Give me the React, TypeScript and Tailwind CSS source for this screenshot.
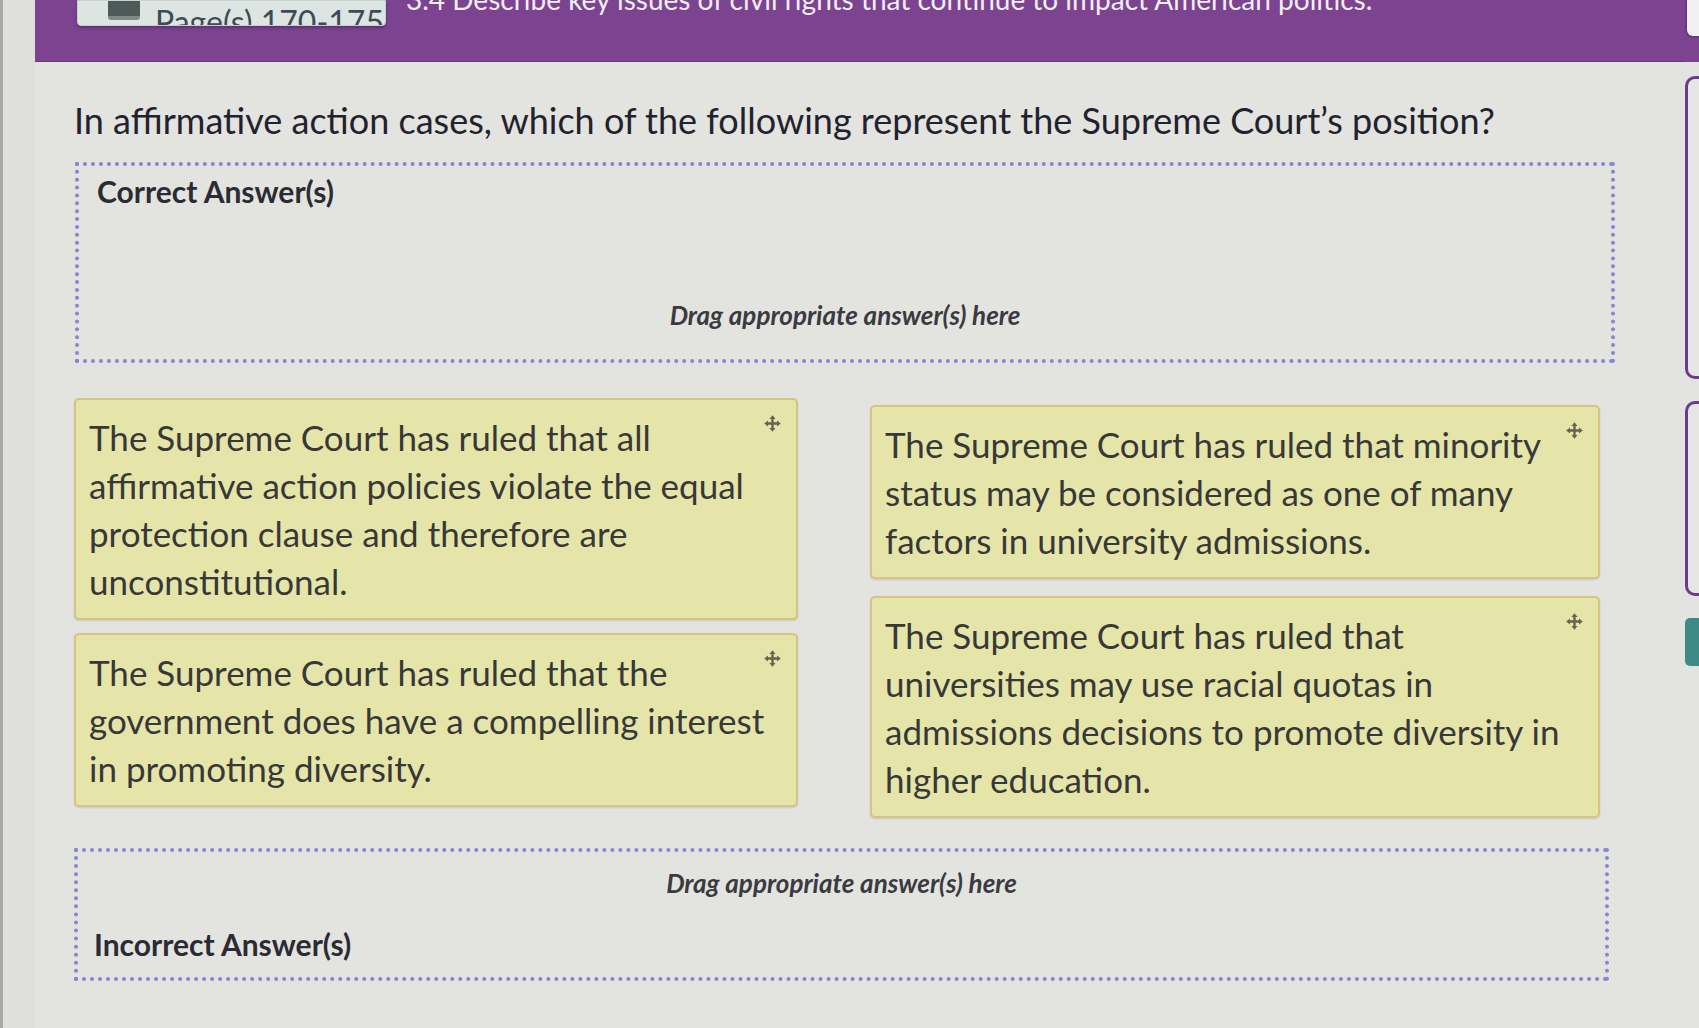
import React from "react";

function MoveIcon() {
  return (
    <svg width="19" height="19" viewBox="0 0 16 16" className="text-[#67644f]">
      <path d="M8 1 L10.6 4.2 H5.4 Z M8 15 L10.6 11.8 H5.4 Z M1 8 L4.2 5.4 V10.6 Z M15 8 L11.8 5.4 V10.6 Z" fill="currentColor" />
      <path d="M8 3.5 V12.5 M3.5 8 H12.5" stroke="currentColor" strokeWidth="2" />
    </svg>
  );
}

function Card({ lines }: { lines: string[] }) {
  return (
    <div className="relative rounded-[5px] border-2 border-[#d7c382] bg-[#e5e5aa] pl-[13px] pr-[30px] py-[13px] shadow-[0_1px_2px_rgba(0,0,0,0.12)]">
      <div className="absolute right-[14px] top-[14px]">
        <MoveIcon />
      </div>
      <p className="font-['Lato',sans-serif] text-[35px] leading-[48px] text-[#383838] whitespace-nowrap">
        {lines.map((l, i) => (
          <span key={i} className="block">
            {l}
          </span>
        ))}
      </p>
    </div>
  );
}

export default function App() {
  return (
    <div className="w-[1699px] h-[1028px] overflow-hidden flex bg-[#e3e3e0] font-['Lato',sans-serif]">
      {/* left strip */}
      <div className="w-[35px] shrink-0 border-l-[3px] border-[#a9a9a7] bg-[#dfdfdc]" />

      {/* main */}
      <div className="flex-1 flex flex-col min-w-0">
        <header className="h-[62px] shrink-0 bg-[#7c4391] flex items-start overflow-hidden border-b border-[#6a3a7e]">
          <div className="ml-[42px] w-[309px] h-[26px] rounded-b-[4px] bg-[#dde5e2] border border-[#c7d0cd] flex items-end overflow-hidden shadow-[0_2px_3px_rgba(0,0,0,0.25)]">
            <div className="ml-[30px] mb-[5px] w-[32px] h-[22px] rounded-[3px] bg-[#4e5a58] border-b-[4px] border-[#7d8b88]" />
            <span className="ml-[15px] mb-[-13px] text-[32px] leading-[32px] text-[#3f4a57] whitespace-nowrap">Page(s) 170-175</span>
          </div>
          <span className="ml-[20px] mt-[-16px] text-[28px] leading-[30px] text-[#f3eef6] whitespace-nowrap">
            3.4 Describe key issues of civil rights that continue to impact American politics.
          </span>
        </header>

        <main className="flex-1 pl-[39px] pr-[70px] pt-[34px]">
          <h1 className="text-[36px] leading-[48px] text-[#22222e] whitespace-nowrap">
            In affirmative action cases, which of the following represent the Supreme Court’s position?
          </h1>

          <section className="mt-[18px] ml-[1px] h-[201px] border-[4px] border-dotted border-[#8385d6] flex flex-col px-[18px] pt-[6px] pb-[28px]">
            <div className="text-[30px] leading-[38px] font-bold text-[#2b2b33]">Correct Answer(s)</div>
            <div className="mt-auto text-center text-[26px] leading-[32px] font-bold italic text-[#3a3a40]">
              Drag appropriate answer(s) here
            </div>
          </section>

          <div className="mt-[35px] w-[1526px] grid grid-cols-[724px_730px] gap-x-[72px] items-start">
            <div className="flex flex-col gap-[13px]">
              <Card
                lines={[
                  "The Supreme Court has ruled that all",
                  "affirmative action policies violate the equal",
                  "protection clause and therefore are",
                  "unconstitutional.",
                ]}
              />
              <Card
                lines={[
                  "The Supreme Court has ruled that the",
                  "government does have a compelling interest",
                  "in promoting diversity.",
                ]}
              />
            </div>
            <div className="flex flex-col gap-[17px] pt-[7px]">
              <Card
                lines={[
                  "The Supreme Court has ruled that minority",
                  "status may be considered as one of many",
                  "factors in university admissions.",
                ]}
              />
              <Card
                lines={[
                  "The Supreme Court has ruled that",
                  "universities may use racial quotas in",
                  "admissions decisions to promote diversity in",
                  "higher education.",
                ]}
              />
            </div>
          </div>

          <section className="mt-[30px] w-[1535px] h-[133px] border-[4px] border-dotted border-[#8385d6] flex flex-col px-[16px] pt-[15px] pb-[14px]">
            <div className="text-center text-[26px] leading-[32px] font-bold italic text-[#3a3a40]">
              Drag appropriate answer(s) here
            </div>
            <div className="mt-auto text-[30px] leading-[38px] font-bold text-[#2b2b33]">Incorrect Answer(s)</div>
          </section>
        </main>
      </div>

      {/* right strip */}
      <div className="w-[14px] shrink-0 flex flex-col">
        <div className="h-[62px] bg-[#7c4391] pt-0">
          <div className="h-[38px] rounded-bl-[8px] bg-[#f1f1f1] border-l-2 border-b-2 border-[#6a3a7e]" />
        </div>
        <div className="mt-[14px] h-[303px] rounded-l-[10px] border-[3px] border-r-0 border-[#6b3b8c] bg-[#e6e6e4]" />
        <div className="mt-[22px] h-[195px] rounded-l-[10px] border-[3px] border-r-0 border-[#6b3b8c] bg-[#e6e6e4]" />
        <div className="mt-[22px] h-[48px] rounded-l-[5px] bg-[#3e8a86]" />
      </div>
    </div>
  );
}
